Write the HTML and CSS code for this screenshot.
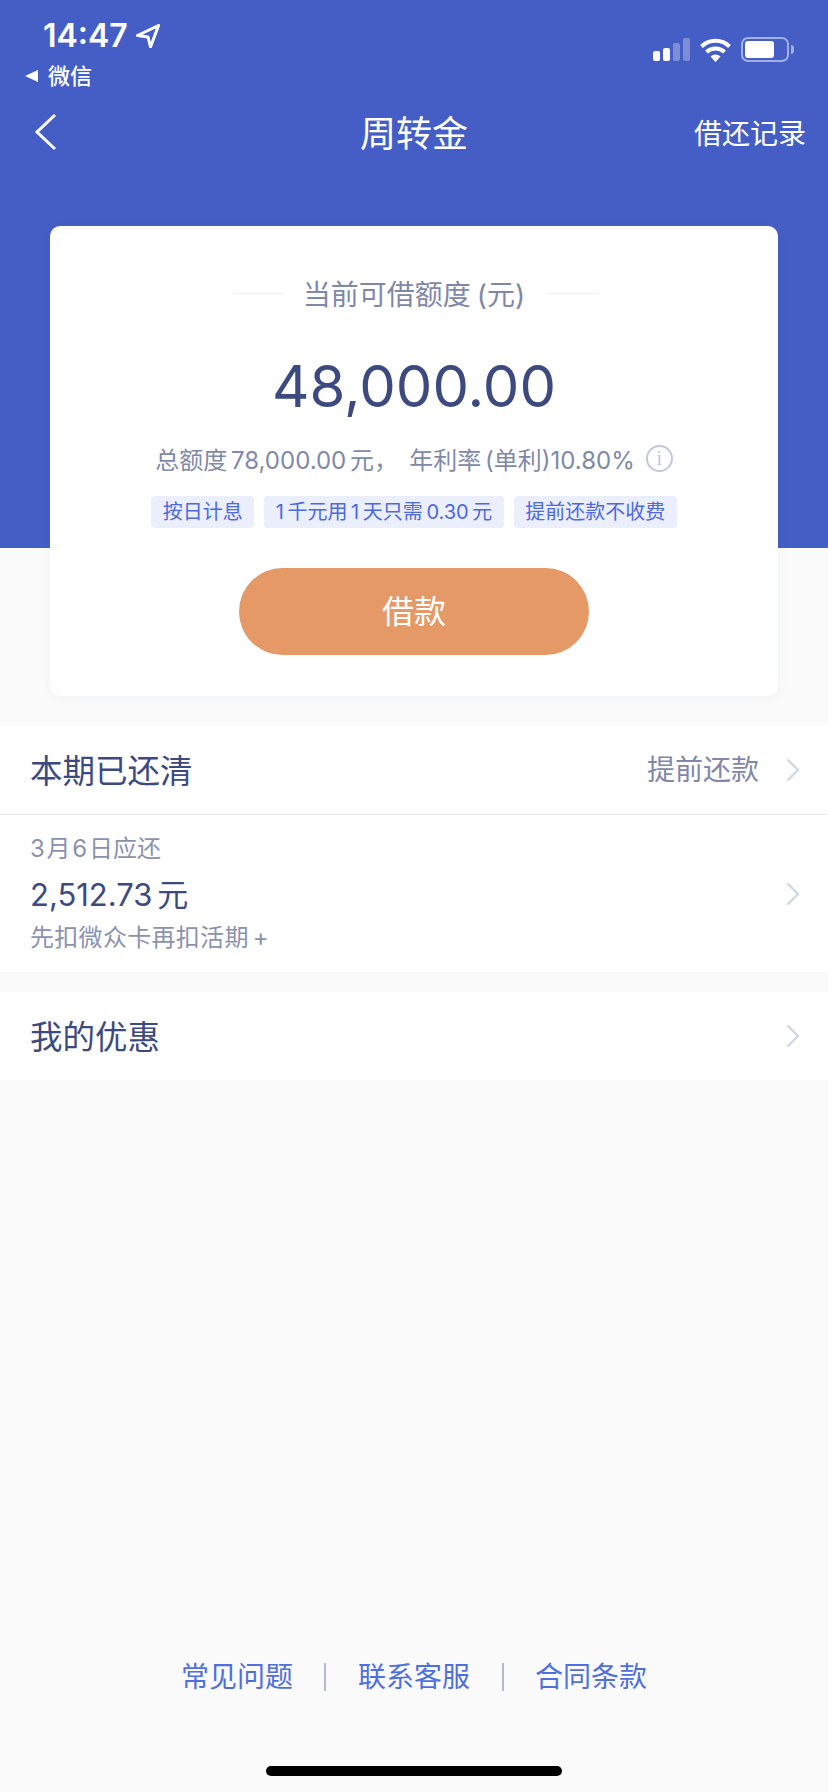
FILE: index.html
```html
<!doctype html>
<html>
<head>
  <meta charset="utf-8">
  <title>周转金</title>
  <link rel="stylesheet" href="styles.css">
</head>
<body>
  <div id="page">
    <div class="hero">
      <div class="status">
        <div class="status-left">
          <div class="clock">14:47
            <svg class="locate" width="24" height="24" viewBox="0 0 24 24"><path d="M22.500 1.500 1.500 11.500l10.500 1.500 2.500 10z" fill="none" stroke="#fff" stroke-width="3" stroke-linejoin="round"/></svg>
          </div>
          <div class="backapp"><span class="tri"></span>微信</div>
        </div>
        <div class="status-right">
          <div class="signal"><i class="b1"></i><i class="b2"></i><i class="b3"></i><i class="b4"></i></div>
          <svg class="wifi" width="31" height="24" viewBox="0 0 31 24"><path d="M1.500 8.500a20 20 0 0 1 28 0M6.500 14a13 13 0 0 1 18 0" fill="none" stroke="#fff" stroke-width="4"/><path d="M10.500 18.500a7 7 0 0 1 10 0l-5 5.500z" fill="#fff"/></svg>
          <div class="battery"><div class="level"></div></div>
          <div class="cap"></div>
        </div>
      </div>
      <div class="nav">
        <svg class="back" width="24" height="38" viewBox="0 0 24 38"><path d="M21 2 3 19l18 17" fill="none" stroke="#fff" stroke-width="3"/></svg>
        <div class="title">周转金</div>
        <div class="records">借还记录</div>
      </div>
    </div>

    <div class="card">
      <div class="quota-label"><span class="dash"></span>当前可借额度 (元)<span class="dash"></span></div>
      <div class="amount">48,000.00</div>
      <div class="rate">总额度 78,000.00 元，   年利率 (单利)10.80%<span class="info">i</span></div>
      <div class="tags">
        <span class="tag">按日计息</span>
        <span class="tag">1 千元用 1 天只需 0.30 元</span>
        <span class="tag">提前还款不收费</span>
      </div>
      <div class="btn">借款</div>
    </div>

    <div class="group">
      <div class="row row-head">
        <div class="row-title">本期已还清</div>
        <div class="row-side"><span class="side-text">提前还款</span>
          <svg class="chev" width="14" height="24" viewBox="0 0 14 24"><path d="M1.500 1.500 12 12 1.500 22.500" fill="none" stroke="#d3d6e4" stroke-width="2.400"/></svg>
        </div>
      </div>
      <div class="row row-bill">
        <div class="bill">
          <div class="bill-date">3 月 6 日应还</div>
          <div class="bill-sum">2,512.73 元</div>
          <div class="bill-note">先扣微众卡再扣活期 +</div>
        </div>
        <div class="row-side">
          <svg class="chev" width="14" height="24" viewBox="0 0 14 24"><path d="M1.500 1.500 12 12 1.500 22.500" fill="none" stroke="#d3d6e4" stroke-width="2.400"/></svg>
        </div>
      </div>
    </div>

    <div class="group offers">
      <div class="row row-head">
        <div class="row-title">我的优惠</div>
        <div class="row-side">
          <svg class="chev" width="14" height="24" viewBox="0 0 14 24"><path d="M1.500 1.500 12 12 1.500 22.500" fill="none" stroke="#d3d6e4" stroke-width="2.400"/></svg>
        </div>
      </div>
    </div>

    <div class="footer">
      <a>常见问题</a><span class="sep"></span><a>联系客服</a><span class="sep"></span><a>合同条款</a>
    </div>
    <div class="home"></div>
  </div>
</body>
</html>
```

FILE: styles.css
```css
html, body {
  margin: 0;
  padding: 0;
}
body {
  background-color: #fafafa;
  font-family: Inter, "Noto Sans CJK SC", sans-serif;
  font-weight: 400;
}
#page {
  width: 828px;
  height: 1792px;
  overflow: hidden;
  display: flex;
  flex-direction: column;
  position: relative;
}

.hero {
  height: 548px;
  flex: none;
  background-color: #455ec5;
  color: #fff;
}
.status {
  display: flex;
  justify-content: space-between;
  height: 96px;
}
.status-left {
  padding: 16px 0 0 25px;
}
.clock {
  display: flex;
  align-items: center;
  gap: 8px;
  padding-left: 18px;
  font-size: 32px;
  font-weight: 600;
  line-height: 40px;
}
.backapp {
  display: flex;
  align-items: center;
  gap: 10px;
  font-size: 22px;
  font-weight: 500;
  line-height: 30px;
  margin-top: 5px;
}
.tri {
  width: 0;
  height: 0;
  border-top: 6.500px solid transparent;
  border-bottom: 6.500px solid transparent;
  border-right: 13px solid #fff;
}
.status-right {
  display: flex;
  align-items: center;
  height: 25px;
  padding: 37px 34px 0 0;
}
.signal {
  display: flex;
  align-items: flex-end;
  gap: 3px;
  height: 23px;
  margin-right: 10px;
}
.signal i {
  display: block;
  width: 7px;
  border-radius: 2px;
  background-color: #fff;
}
.b1 { height: 10px; }
.b2 { height: 13px; }
.signal .b3 { height: 18px; opacity: .3; }
.signal .b4 { height: 23px; opacity: .3; }
.battery {
  box-sizing: border-box;
  width: 48px;
  height: 25px;
  margin-left: 10px;
  padding: 2px;
  border: 2px solid rgba(255, 255, 255, .5);
  border-radius: 7px;
}
.level {
  width: 29px;
  height: 17px;
  border-radius: 3px;
  background-color: #fff;
}
.cap {
  width: 3px;
  height: 9px;
  margin-left: 2px;
  border-radius: 0 3px 3px 0;
  background-color: rgba(255, 255, 255, .5);
}

.nav {
  display: flex;
  align-items: center;
  justify-content: space-between;
  height: 48px;
  padding: 12px 22px 0 34px;
  position: relative;
}
.title {
  position: absolute;
  left: 0;
  right: 0;
  margin-top: -3px;
  text-align: center;
  font-size: 36px;
}
.records {
  font-size: 28px;
}

.card {
  box-sizing: border-box;
  width: 728px;
  height: 470px;
  margin: -322px auto 0;
  padding-top: 49px;
  border-radius: 10px;
  background-color: #fff;
  box-shadow: 0 2px 12px rgba(60, 70, 120, .04);
  text-align: center;
  position: relative;
}
.quota-label {
  display: flex;
  align-items: center;
  justify-content: center;
  gap: 20px;
  height: 36px;
  padding-left: 3px;
  font-size: 28px;
  word-spacing: -2px;
  color: #7f88a8;
}
.dash {
  width: 50px;
  height: 1px;
  background-color: #eeeff4;
}
.quota-label .dash:last-child {
  margin-left: 3px;
}
.amount {
  margin-top: 39px;
  font-size: 58px;
  line-height: 72px;
  color: #3d4a7f;
}
.rate {
  display: flex;
  align-items: center;
  justify-content: center;
  margin-top: 21px;
  height: 30px;
  font-size: 24px;
  word-spacing: -3px;
  white-space: pre;
  color: #8089a8;
}
.info {
  box-sizing: border-box;
  width: 27px;
  height: 27px;
  margin-left: 11px;
  border: 2px solid #c3c7d6;
  border-radius: 50%;
  font-family: "Liberation Serif", serif;
  font-size: 20px;
  line-height: 23px;
  color: #c3c7d6;
}
.tags {
  display: flex;
  justify-content: center;
  gap: 10px;
  margin-top: 23px;
}
.tag {
  padding: 0 11.500px;
  height: 32px;
  line-height: 32px;
  border-radius: 4px;
  background-color: #ebeefb;
  font-size: 20px;
  word-spacing: -2px;
  color: #4e69dc;
}
.btn {
  width: 350px;
  height: 87px;
  margin: 40px auto 0;
  border-radius: 44px;
  background-color: #e49966;
  color: #fff;
  font-size: 32px;
  line-height: 87px;
}

.group {
  margin-top: 30px;
  background-color: #fff;
}
.group.offers {
  margin-top: 20px;
}
.row {
  display: flex;
  align-items: center;
  justify-content: space-between;
  padding: 0 28px 0 30px;
}
.row-head {
  height: 88px;
}
.row-bill {
  box-sizing: border-box;
  height: 158px;
  border-top: 1px solid #ececf0;
}
.row-title {
  margin-bottom: 4px;
  font-size: 32.500px;
  color: #3d4a7f;
}
.row-side {
  display: flex;
  align-items: center;
  font-size: 28px;
  color: #7f88a8;
}
.side-text {
  margin-bottom: 4px;
}
.chev {
  margin-left: 27px;
}
.bill {
  margin-bottom: 4px;
}
.bill-date, .bill-note {
  font-size: 24px;
  line-height: 36px;
  word-spacing: -5px;
  color: #8a92ae;
}
.bill-note {
  line-height: 30px;
  word-spacing: -3px;
  letter-spacing: .3px;
}
.bill-sum {
  font-size: 31px;
  line-height: 56px;
  word-spacing: -4px;
  color: #3d4a7f;
}

.footer {
  position: absolute;
  left: 0;
  right: 0;
  bottom: 97px;
  display: flex;
  justify-content: center;
  align-items: center;
  font-size: 28px;
  line-height: 36px;
  color: #4f6fdc;
}
.sep {
  width: 2px;
  height: 28px;
  margin: 0 31.500px;
  background-color: #b4b9cf;
}
.home {
  position: absolute;
  left: 266px;
  bottom: 16px;
  width: 296px;
  height: 10px;
  border-radius: 5px;
  background-color: #000;
}
```
